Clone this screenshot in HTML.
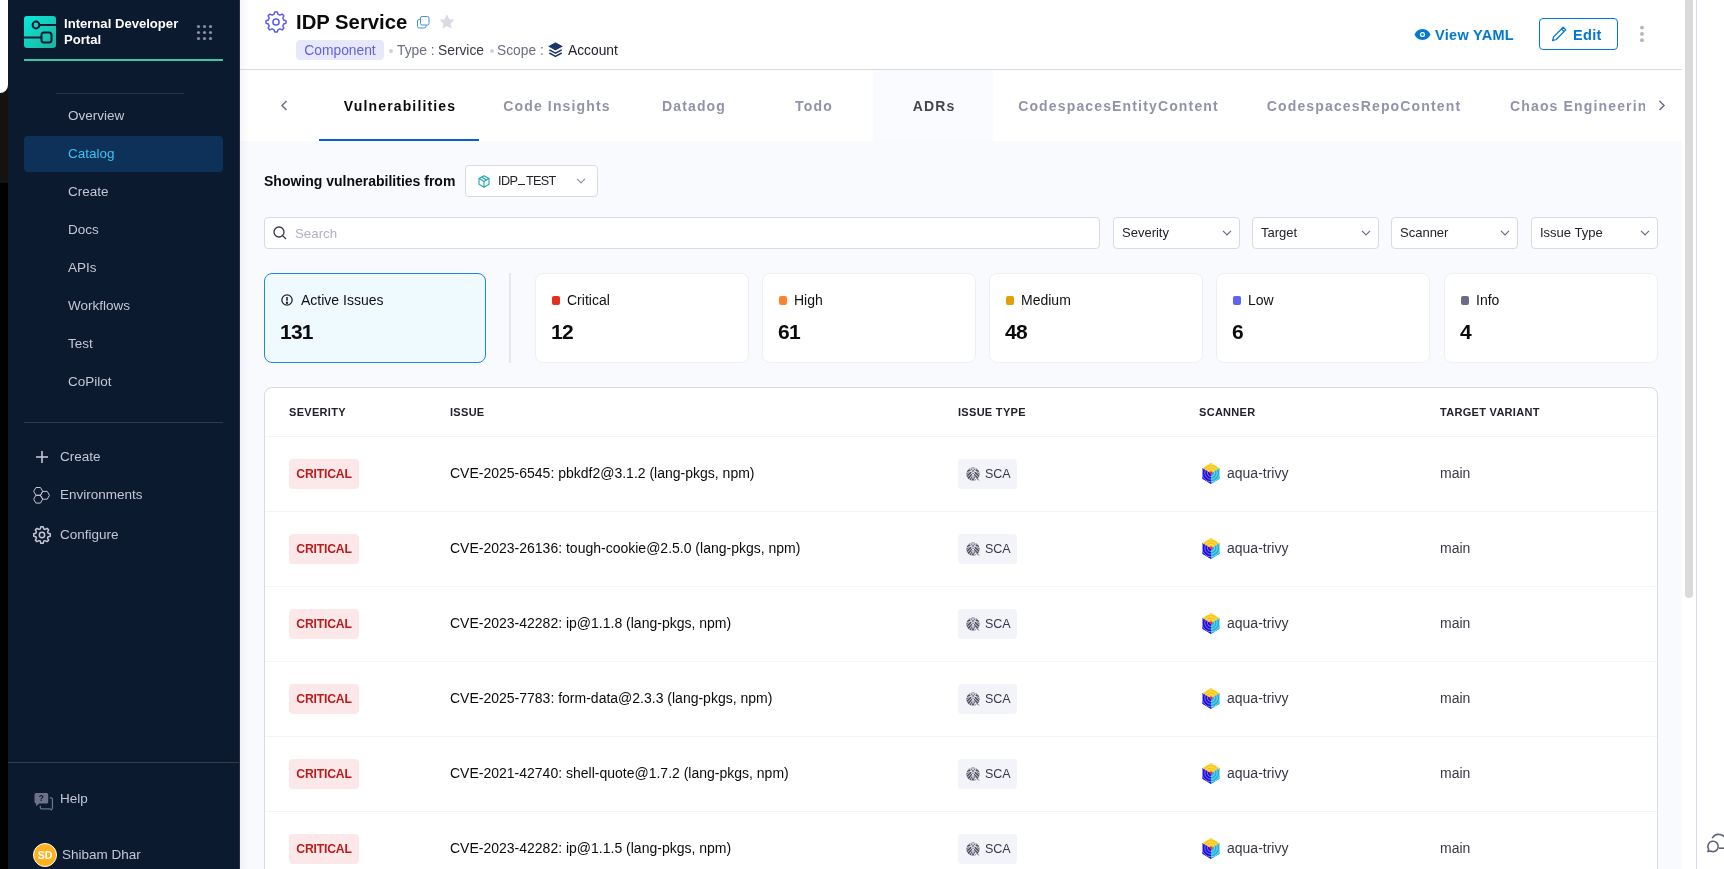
<!DOCTYPE html>
<html><head><meta charset="utf-8">
<style>
*{box-sizing:border-box;margin:0;padding:0}
html,body{width:1724px;height:869px;overflow:hidden;background:#fff;font-family:"Liberation Sans",sans-serif;color:#22222a}
.abs{position:absolute}
#strip{position:absolute;left:0;top:0;width:8px;height:869px;background:#000}
#strip .w{position:absolute;left:0;top:0;width:8px;height:93px;background:#fff;border-bottom-right-radius:8px}
#strip .g{position:absolute;left:0;top:80px;width:8px;height:103px;background:#15120f;z-index:0}
#side{will-change:transform;position:absolute;left:8px;top:0;width:232px;height:869px;background:#0b1a2f}
.nav{position:absolute;left:16px;width:199px;height:36px;border-radius:4px;color:#c5c6d6;font-size:13.5px;line-height:36px;padding-left:44px}
.nav.act{background:#0d3158;color:#3dc2f3}
.nav2{position:absolute;left:52px;color:#c5c6d6;font-size:13.5px;line-height:20px}
#main{will-change:transform;position:absolute;left:240px;top:0;width:1442px;height:869px;background:#f9fafd}
#hdr{position:absolute;left:0;top:0;width:1442px;height:70px;background:#fff;border-bottom:1px solid #d9dae5}
#tabs{position:absolute;left:0;top:70px;width:1442px;height:71px;background:#fff}
.tab{position:absolute;top:0;height:71px;line-height:73px;padding-left:2px;font-size:14px;font-weight:700;letter-spacing:1.15px;color:#9293ab;white-space:nowrap}
.box{position:absolute;background:#fff;border:1px solid #d9dae5;border-radius:4px}
.dd{position:absolute;top:217px;width:127px;height:32px;background:#fff;border:1px solid #d9dae5;border-radius:4px;font-size:13px;color:#22222a;line-height:30px;padding-left:8px}
.card{position:absolute;top:273px;height:90px;background:#fff;border:1px solid #eff0f5;border-radius:8px}
.card .lbl{position:absolute;left:16px;top:18px;font-size:14px;line-height:16px;color:#111114;padding-left:15px}
.card .sq{position:absolute;left:15.5px;top:22px;width:8.5px;height:8.5px;border-radius:2px}
.card .num{position:absolute;left:15px;top:46px;font-size:21px;font-weight:700;line-height:24px;color:#0b0b0d;letter-spacing:-0.8px}
#tbl{position:absolute;left:24px;top:387px;width:1394px;height:520px;background:#fff;border:1px solid #d9dae5;border-radius:8px}
.th{position:absolute;top:18px;font-size:11px;font-weight:700;letter-spacing:0.3px;color:#22222a}
.row{position:absolute;left:0;width:1392px;height:75px;border-top:1px solid #f3f3fa}
.crit{position:absolute;left:24px;top:22px;width:70px;height:30px;background:#fce8e8;border-radius:4px;color:#b91c1c;font-size:12.2px;font-weight:700;line-height:31px;text-align:center;letter-spacing:-0.2px}
.iss{position:absolute;left:185px;top:27px;font-size:14px;line-height:18px;color:#0b0b0d;white-space:nowrap}
.sca{position:absolute;left:693px;top:22px;width:59px;height:30px;background:#f3f3fa;border-radius:4px;color:#383946;font-size:12.5px;line-height:31px;padding-left:27px}
.scan{position:absolute;left:936px;top:27px;font-size:14px;line-height:18px;color:#383946;padding-left:26px}
.tv{position:absolute;left:1175px;top:27px;font-size:14px;line-height:18px;color:#383946}
</style></head><body>
<svg width="0" height="0" style="position:absolute"><defs>
<g id="scaic"><clipPath id="scc"><circle cx="7" cy="7" r="6.6"/></clipPath>
 <g clip-path="url(#scc)"><rect width="14" height="14" fill="#4f5162"/>
 <path d="M0 3.5Q7 -.5 14 3.5M0 6Q7 2 14 6M-1 9.5L7 2 15 9.5M-1 12.5L7 5 15 12.5M2 14L7 7l5 7M4 1l5 13M10 1L5 14" stroke="#f3f3fa" stroke-width=".75" fill="none"/>
 </g>
 <path d="M9.2 8.8L13.2 13.4 8.6 12.2z" fill="#f3f3fa"/><path d="M9 9.2l3.8 4.2" stroke="#4f5162" stroke-width="1"/>
</g>
<g id="trivy">
 <clipPath id="hexc"><path d="M10 .8L18.8 6v11L10 22.2 1.2 17V6z"/></clipPath>
 <g clip-path="url(#hexc)">
 <path d="M10 .8L18.8 6 10 11.2 1.2 6z" fill="#ffc60a"/>
 <path d="M1.2 6L10 11.2V22.2L1.2 17z" fill="#1a0adb"/>
 <path d="M18.8 6L10 11.2V22.2L18.8 17z" fill="#1cb3d9"/>
 <g fill="none" stroke="#fff" stroke-width=".6" opacity=".75">
  <circle cx="10" cy="11" r="3.6"/><circle cx="10" cy="11" r="6.2"/><circle cx="10" cy="11" r="8.8"/>
 </g>
 </g>
 <circle cx="10" cy="11" r="1.4" fill="#ff1f4b"/>
</g>
</defs></svg>
<div id="strip"><div class="g"></div><div class="w"></div></div>
<div id="side">
  <svg class="abs" style="left:16px;top:16px" width="32" height="32" viewBox="0 0 32 32">
    <defs><linearGradient id="lg" x1="0" y1="0" x2="1" y2="1"><stop offset="0" stop-color="#0ae8dc"/><stop offset="1" stop-color="#1eb39e"/></linearGradient></defs>
    <rect x="0" y="0" width="32" height="32" rx="3" fill="url(#lg)"/>
    <circle cx="12" cy="9" r="3.4" fill="none" stroke="#0b1a2f" stroke-width="2"/>
    <line x1="15.4" y1="9" x2="32" y2="9" stroke="#0b1a2f" stroke-width="2"/>
    <rect x="17.5" y="16.5" width="10" height="10" rx="2.5" fill="none" stroke="#0b1a2f" stroke-width="2"/>
    <line x1="0" y1="21.5" x2="17.5" y2="21.5" stroke="#0b1a2f" stroke-width="2"/>
  </svg>
  <div class="abs" style="left:56px;top:16px;font-size:13.1px;font-weight:700;line-height:16px;color:#fff;letter-spacing:0px">Internal Developer<br>Portal</div>
  <svg class="abs" style="left:188px;top:24px" width="17" height="17" viewBox="0 0 17 17" fill="#8b8ca6">
    <circle cx="2.5" cy="2.5" r="1.6"/><circle cx="8.5" cy="2.5" r="1.6"/><circle cx="14.5" cy="2.5" r="1.6"/>
    <circle cx="2.5" cy="8.5" r="1.6"/><circle cx="8.5" cy="8.5" r="1.6"/><circle cx="14.5" cy="8.5" r="1.6"/>
    <circle cx="2.5" cy="14.5" r="1.6"/><circle cx="8.5" cy="14.5" r="1.6"/><circle cx="14.5" cy="14.5" r="1.6"/>
  </svg>
  <div class="abs" style="left:16px;top:59px;width:199px;height:2px;background:#3cc6a8"></div>
  <div class="abs" style="left:48px;top:93px;width:128px;height:1px;background:#27344a"></div>
  <div class="nav" style="top:98px">Overview</div>
  <div class="nav act" style="top:136px">Catalog</div>
  <div class="nav" style="top:174px">Create</div>
  <div class="nav" style="top:212px">Docs</div>
  <div class="nav" style="top:250px">APIs</div>
  <div class="nav" style="top:288px">Workflows</div>
  <div class="nav" style="top:326px">Test</div>
  <div class="nav" style="top:364px">CoPilot</div>
  <div class="abs" style="left:16px;top:422px;width:199px;height:1px;background:#36384a"></div>
  <svg class="abs" style="left:27px;top:450px" width="14" height="14" viewBox="0 0 14 14" stroke="#c5c6d6" stroke-width="1.6"><line x1="7" y1="1" x2="7" y2="13"/><line x1="1" y1="7" x2="13" y2="7"/></svg>
  <div class="nav2" style="top:447px">Create</div>
  <svg class="abs" style="left:24px;top:486px" width="20" height="18" viewBox="0 0 20 18" fill="none" stroke="#c5c6d6" stroke-width="1" stroke-linejoin="round">
    <path d="M10.70 5.40 L8.45 9.29 L3.95 9.29 L1.70 5.40 L3.95 1.50 L8.45 1.50 Z"/><path d="M10.70 13.19 L8.45 17.09 L3.95 17.09 L1.70 13.19 L3.95 9.29 L8.45 9.29 Z"/><path d="M17.45 9.29 L15.20 13.19 L10.70 13.19 L8.45 9.29 L10.70 5.40 L15.20 5.40 Z"/>
  </svg>
  <div class="nav2" style="top:485px">Environments</div>
  <svg class="abs" style="left:24px;top:525px" width="20" height="20" viewBox="0 0 24 24" fill="none" stroke="#c5c6d6" stroke-width="1.8" stroke-linejoin="round">
    <path d="M9.91 4.69 L10.61 2.10 A10.0 10.0 0 0 1 13.39 2.10 L14.09 4.69 A7.6 7.6 0 0 1 15.68 5.35 L18.02 4.01 A10.0 10.0 0 0 1 19.99 5.98 L18.65 8.32 A7.6 7.6 0 0 1 19.31 9.91 L21.90 10.61 A10.0 10.0 0 0 1 21.90 13.39 L19.31 14.09 A7.6 7.6 0 0 1 18.65 15.68 L19.99 18.02 A10.0 10.0 0 0 1 18.02 19.99 L15.68 18.65 A7.6 7.6 0 0 1 14.09 19.31 L13.39 21.90 A10.0 10.0 0 0 1 10.61 21.90 L9.91 19.31 A7.6 7.6 0 0 1 8.32 18.65 L5.98 19.99 A10.0 10.0 0 0 1 4.01 18.02 L5.35 15.68 A7.6 7.6 0 0 1 4.69 14.09 L2.10 13.39 A10.0 10.0 0 0 1 2.10 10.61 L4.69 9.91 A7.6 7.6 0 0 1 5.35 8.32 L4.01 5.98 A10.0 10.0 0 0 1 5.98 4.01 L8.32 5.35 A7.6 7.6 0 0 1 9.91 4.69Z"/>
    <circle cx="12" cy="12" r="3.2"/>
  </svg>
  <div class="nav2" style="top:525px">Configure</div>
  <div class="abs" style="left:0;top:762px;width:232px;height:1px;background:#3a3b4d"></div>
  <svg class="abs" style="left:26px;top:792px" width="20" height="19" viewBox="0 0 19 18">
    <path d="M2 1h10a1.5 1.5 0 0 1 1.5 1.5v7a1.5 1.5 0 0 1-1.5 1.5H5l-3 2.5V11A1.5 1.5 0 0 1 .5 9.5v-7A1.5 1.5 0 0 1 2 1z" fill="#6f7189"/>
    <text x="7" y="8.6" font-size="8" font-weight="700" fill="#0b1a2f" text-anchor="middle" font-family="Liberation Sans">?</text>
    <path d="M15 5.5h1.5a1 1 0 0 1 1 1v9l-1.2 1.5-1.3-1H7a1 1 0 0 1-1-1v-2" fill="none" stroke="#6f7189" stroke-width="1.2"/>
  </svg>
  <div class="nav2" style="top:789px">Help</div>
  <div class="abs" style="left:25px;top:843px;width:24px;height:24px;border-radius:12px;background:#fbb11c;border:1.2px solid #fff;color:#fff;font-size:10.5px;font-weight:700;text-align:center;line-height:22px">SD</div>
  <div class="nav2" style="left:54px;top:845px">Shibam Dhar</div>
</div>
<div id="main">
  <div id="hdr">
    <svg class="abs" style="left:24px;top:10px" width="24" height="24" viewBox="0 0 24 24" fill="none" stroke="#5b5cf0" stroke-width="1.5" stroke-linejoin="round">
      <path d="M9.96 4.37 L10.78 2.07 A10.0 10.0 0 0 1 13.22 2.07 L14.04 4.37 A7.9 7.9 0 0 1 15.95 5.16 L18.16 4.12 A10.0 10.0 0 0 1 19.88 5.84 L18.84 8.05 A7.9 7.9 0 0 1 19.63 9.96 L21.93 10.78 A10.0 10.0 0 0 1 21.93 13.22 L19.63 14.04 A7.9 7.9 0 0 1 18.84 15.95 L19.88 18.16 A10.0 10.0 0 0 1 18.16 19.88 L15.95 18.84 A7.9 7.9 0 0 1 14.04 19.63 L13.22 21.93 A10.0 10.0 0 0 1 10.78 21.93 L9.96 19.63 A7.9 7.9 0 0 1 8.05 18.84 L5.84 19.88 A10.0 10.0 0 0 1 4.12 18.16 L5.16 15.95 A7.9 7.9 0 0 1 4.37 14.04 L2.07 13.22 A10.0 10.0 0 0 1 2.07 10.78 L4.37 9.96 A7.9 7.9 0 0 1 5.16 8.05 L4.12 5.84 A10.0 10.0 0 0 1 5.84 4.12 L8.05 5.16 A7.9 7.9 0 0 1 9.96 4.37Z"/>
      <circle cx="12" cy="12" r="3.1"/>
    </svg>
    <div class="abs" style="left:56px;top:10px;font-size:20.3px;font-weight:700;line-height:24px;color:#0b0b0d;white-space:nowrap">IDP Service</div>
    <svg class="abs" style="left:176px;top:15px" width="14" height="14" viewBox="0 0 14 14" fill="none" stroke="#3f90e0" stroke-width="1">
      <rect x="4.5" y="1.5" width="8.5" height="8.5" rx="1.6"/>
      <path d="M4.5 4.5h-1.4a1.6 1.6 0 0 0-1.6 1.6v5.3a1.6 1.6 0 0 0 1.6 1.6h5.3a1.6 1.6 0 0 0 1.6-1.6v-1.4"/>
    </svg>
    <svg class="abs" style="left:199px;top:14px" width="16" height="15.3" viewBox="0 0 24 23"><path d="M12 0.5l3.4 7.3 7.9.9-5.9 5.4 1.6 7.9L12 18 5 22l1.6-7.9L.7 8.7l7.9-.9z" fill="#d9dae5"/></svg>
    <div class="abs" style="left:56px;top:40px;width:88px;height:20px;background:#e8e8fd;border-radius:4px;color:#6461db;font-size:13.8px;line-height:21px;text-align:center">Component</div>
    <div class="abs" style="left:149px;top:49px;width:4px;height:4px;border-radius:2px;background:#d0d1dc"></div>
    <div class="abs" style="left:157px;top:41px;font-size:13.8px;line-height:20px;color:#6b6d85;white-space:nowrap">Type :</div>
    <div class="abs" style="left:198px;top:41px;font-size:13.8px;line-height:20px;color:#383946;white-space:nowrap">Service</div>
    <div class="abs" style="left:250px;top:49px;width:4px;height:4px;border-radius:2px;background:#d0d1dc"></div>
    <div class="abs" style="left:257px;top:41px;font-size:13.8px;line-height:20px;color:#6b6d85;white-space:nowrap">Scope :</div>
    <svg class="abs" style="left:308px;top:42px" width="15" height="16" viewBox="0 0 14 15">
      <path d="M7 .8l6 3.3-6 3.3-6-3.3z" fill="#1b3564" stroke="#1b3564" stroke-width="1" stroke-linejoin="round"/>
      <path d="M1.2 7.3L7 10.5l5.8-3.2" fill="none" stroke="#1b3564" stroke-width="1.4" stroke-linejoin="round"/>
      <path d="M1.2 10.3L7 13.5l5.8-3.2" fill="none" stroke="#1b3564" stroke-width="1.4" stroke-linejoin="round"/>
    </svg>
    <div class="abs" style="left:328px;top:41px;font-size:13.8px;line-height:20px;color:#22222a">Account</div>
    <svg class="abs" style="left:1174px;top:28px" width="17" height="13" viewBox="0 0 17 13">
      <path d="M8.5 1C4.5 1 1.6 3.8.6 6.5c1 2.7 3.9 5.5 7.9 5.5s6.9-2.8 7.9-5.5C15.4 3.8 12.5 1 8.5 1z" fill="#0278d5"/>
      <circle cx="8.5" cy="6.5" r="2.6" fill="#fff"/><circle cx="8.5" cy="6.5" r="1.3" fill="#0278d5"/>
    </svg>
    <div class="abs" style="left:1195px;top:25px;font-size:14.5px;font-weight:700;line-height:20px;color:#0278d5;letter-spacing:0.3px;white-space:nowrap">View YAML</div>
    <div class="abs" style="left:1299px;top:18px;width:79px;height:32px;border:1px solid #0278d5;border-radius:4px"></div>
    <svg class="abs" style="left:1311px;top:26px" width="17" height="16" viewBox="0 0 17 16" fill="none" stroke="#0278d5" stroke-width="1.3" stroke-linejoin="round">
      <path d="M12.2 1.3l2.6 2.6L5.2 13.5 1.6 14.6l1-3.7z"/><path d="M10.5 3l2.6 2.6"/>
    </svg>
    <div class="abs" style="left:1333px;top:25px;font-size:14.5px;font-weight:700;line-height:20px;color:#0278d5;letter-spacing:0.3px">Edit</div>
    <svg class="abs" style="left:1400px;top:25px" width="6" height="18" viewBox="0 0 6 18" fill="#b0b1c4"><circle cx="2" cy="2.6" r="1.9"/><circle cx="2" cy="8.9" r="1.9"/><circle cx="2" cy="15.2" r="1.9"/></svg>
  </div>
  <div id="tabs">
    <svg class="abs" style="left:40px;top:30px" width="8" height="11" viewBox="0 0 8 11" fill="none" stroke="#6b6d85" stroke-width="1.5"><path d="M6.5 1L2 5.5l4.5 4.5"/></svg>
    <div class="tab" style="left:79px;width:160px;color:#0b0b0d;text-align:center">Vulnerabilities</div>
    <div class="abs" style="left:79px;top:69px;width:160px;height:2px;background:#0b5cd7"></div>
    <div class="tab" style="left:239px;width:154px;text-align:center">Code Insights</div>
    <div class="tab" style="left:393px;width:120px;text-align:center">Datadog</div>
    <div class="tab" style="left:513px;width:120px;text-align:center">Todo</div>
    <div class="tab" style="left:633px;width:120px;text-align:center;background:#fafbfe;color:#45464f">ADRs</div>
    <div class="tab" style="left:753px;width:249px;text-align:center">CodespacesEntityContent</div>
    <div class="tab" style="left:1002px;width:242px;text-align:center">CodespacesRepoContent</div>
    <div class="tab" style="left:1268px;width:137px;overflow:hidden">Chaos Engineering</div>
    <svg class="abs" style="left:1418px;top:30px" width="8" height="11" viewBox="0 0 8 11" fill="none" stroke="#6b6d85" stroke-width="1.5"><path d="M1.5 1L6 5.5 1.5 10"/></svg>
  </div>
  <div class="abs" style="left:24px;top:171px;font-size:14px;font-weight:700;line-height:20px;color:#0b0b0d;white-space:nowrap">Showing vulnerabilities from</div>
  <div class="box" style="left:225px;top:165px;width:133px;height:32px"></div>
  <svg class="abs" style="left:238px;top:175px" width="12" height="13" viewBox="0 0 12 13" fill="none" stroke="#1da5b5" stroke-width="1.1" stroke-linejoin="round">
    <path d="M6 .7l5 2.8v5.8l-5 2.9-5-2.9V3.5z"/><path d="M1 3.5l5 2.9 5-2.9M6 6.4v5.8"/><path d="M3.5 2.1l5 2.9" />
  </svg>
  <div class="abs" style="left:258px;top:171px;font-size:12.7px;line-height:20px;color:#22222a;letter-spacing:-0.65px;white-space:nowrap">IDP<span style="display:inline-block;width:6.5px;height:1.3px;background:#22222a;margin:0 1px 0 1.2px;vertical-align:baseline"></span>TEST</div>
  <svg class="abs" style="left:336px;top:178px" width="10" height="6" viewBox="0 0 10 6" fill="none" stroke="#9293ab" stroke-width="1.2"><path d="M1 .8l4 4 4-4"/></svg>
  <div class="box" style="left:24px;top:217px;width:836px;height:32px"></div>
  <svg class="abs" style="left:33px;top:226px" width="14" height="14" viewBox="0 0 14 14" fill="none" stroke="#383946" stroke-width="1.3"><circle cx="6" cy="6" r="5"/><path d="M9.6 9.6l3.4 3.4"/></svg>
  <div class="abs" style="left:55px;top:224px;font-size:13.3px;line-height:20px;color:#b0b1c4">Search</div>
  <div class="dd" style="left:873px">Severity</div><svg class="abs" style="left:982px;top:230px" width="10" height="6" viewBox="0 0 10 6" fill="none" stroke="#6b6d85" stroke-width="1.2"><path d="M1 .8l4 4 4-4"/></svg>
  <div class="dd" style="left:1012px">Target</div><svg class="abs" style="left:1121px;top:230px" width="10" height="6" viewBox="0 0 10 6" fill="none" stroke="#6b6d85" stroke-width="1.2"><path d="M1 .8l4 4 4-4"/></svg>
  <div class="dd" style="left:1151px">Scanner</div><svg class="abs" style="left:1260px;top:230px" width="10" height="6" viewBox="0 0 10 6" fill="none" stroke="#6b6d85" stroke-width="1.2"><path d="M1 .8l4 4 4-4"/></svg>
  <div class="dd" style="left:1291px">Issue Type</div><svg class="abs" style="left:1400px;top:230px" width="10" height="6" viewBox="0 0 10 6" fill="none" stroke="#6b6d85" stroke-width="1.2"><path d="M1 .8l4 4 4-4"/></svg>
  <div class="card" style="left:24px;width:222px;background:#effaff;border-color:#1f86dc"><svg class="abs" style="left:16px;top:20px" width="12" height="12" viewBox="0 0 13 13" fill="none" stroke="#22222a" stroke-width="1.4"><circle cx="6.5" cy="6.5" r="5.6"/><path d="M6.5 3.3v3.9" stroke-width="1.7"/><circle cx="6.5" cy="9.4" r=".6" fill="#22222a"/></svg><div class="lbl" style="padding-left:20px">Active Issues</div><div class="num">131</div></div>
  <div class="abs" style="left:269px;top:273px;width:2px;height:90px;background:#e6e7ee"></div>
  <div class="card" style="left:295px;width:214px"><div class="sq" style="background:#e2321f"></div><div class="lbl">Critical</div><div class="num">12</div></div>
  <div class="card" style="left:522px;width:214px"><div class="sq" style="background:#ff8233"></div><div class="lbl">High</div><div class="num">61</div></div>
  <div class="card" style="left:749px;width:214px"><div class="sq" style="background:#e2a00c"></div><div class="lbl">Medium</div><div class="num">48</div></div>
  <div class="card" style="left:976px;width:214px"><div class="sq" style="background:#6062f2"></div><div class="lbl">Low</div><div class="num">6</div></div>
  <div class="card" style="left:1204px;width:214px"><div class="sq" style="background:#6b6d85"></div><div class="lbl">Info</div><div class="num">4</div></div>
  <div id="tbl">
    <div class="th" style="left:24px">SEVERITY</div>
    <div class="th" style="left:185px">ISSUE</div>
    <div class="th" style="left:693px">ISSUE TYPE</div>
    <div class="th" style="left:934px">SCANNER</div>
    <div class="th" style="left:1175px">TARGET VARIANT</div>
    <div class="row" style="top:48px"><div class="crit">CRITICAL</div><div class="iss">CVE-2025-6545: pbkdf2@3.1.2 (lang-pkgs, npm)</div><div class="sca"><svg class="abs" style="left:8px;top:8px" width="14" height="14" viewBox="0 0 14 14"><use href="#scaic"/></svg>SCA</div><div class="scan"><svg class="abs" style="left:0;top:-2px" width="20" height="23" viewBox="0 0 20 23"><use href="#trivy"/></svg>aqua-trivy</div><div class="tv">main</div></div>
    <div class="row" style="top:123px"><div class="crit">CRITICAL</div><div class="iss">CVE-2023-26136: tough-cookie@2.5.0 (lang-pkgs, npm)</div><div class="sca"><svg class="abs" style="left:8px;top:8px" width="14" height="14" viewBox="0 0 14 14"><use href="#scaic"/></svg>SCA</div><div class="scan"><svg class="abs" style="left:0;top:-2px" width="20" height="23" viewBox="0 0 20 23"><use href="#trivy"/></svg>aqua-trivy</div><div class="tv">main</div></div>
    <div class="row" style="top:198px"><div class="crit">CRITICAL</div><div class="iss">CVE-2023-42282: ip@1.1.8 (lang-pkgs, npm)</div><div class="sca"><svg class="abs" style="left:8px;top:8px" width="14" height="14" viewBox="0 0 14 14"><use href="#scaic"/></svg>SCA</div><div class="scan"><svg class="abs" style="left:0;top:-2px" width="20" height="23" viewBox="0 0 20 23"><use href="#trivy"/></svg>aqua-trivy</div><div class="tv">main</div></div>
    <div class="row" style="top:273px"><div class="crit">CRITICAL</div><div class="iss">CVE-2025-7783: form-data@2.3.3 (lang-pkgs, npm)</div><div class="sca"><svg class="abs" style="left:8px;top:8px" width="14" height="14" viewBox="0 0 14 14"><use href="#scaic"/></svg>SCA</div><div class="scan"><svg class="abs" style="left:0;top:-2px" width="20" height="23" viewBox="0 0 20 23"><use href="#trivy"/></svg>aqua-trivy</div><div class="tv">main</div></div>
    <div class="row" style="top:348px"><div class="crit">CRITICAL</div><div class="iss">CVE-2021-42740: shell-quote@1.7.2 (lang-pkgs, npm)</div><div class="sca"><svg class="abs" style="left:8px;top:8px" width="14" height="14" viewBox="0 0 14 14"><use href="#scaic"/></svg>SCA</div><div class="scan"><svg class="abs" style="left:0;top:-2px" width="20" height="23" viewBox="0 0 20 23"><use href="#trivy"/></svg>aqua-trivy</div><div class="tv">main</div></div>
    <div class="row" style="top:423px"><div class="crit">CRITICAL</div><div class="iss">CVE-2023-42282: ip@1.1.5 (lang-pkgs, npm)</div><div class="sca"><svg class="abs" style="left:8px;top:8px" width="14" height="14" viewBox="0 0 14 14"><use href="#scaic"/></svg>SCA</div><div class="scan"><svg class="abs" style="left:0;top:-2px" width="20" height="23" viewBox="0 0 20 23"><use href="#trivy"/></svg>aqua-trivy</div><div class="tv">main</div></div>
  </div>
</div>
<div class="abs" style="left:240px;top:0;width:9px;height:869px;background:linear-gradient(90deg,rgba(0,0,10,.035),rgba(0,0,10,0))"></div>
<div class="abs" style="left:239px;top:0;width:1px;height:869px;background:#2a2d3d"></div>
<div class="abs" style="left:1682px;top:0;width:14px;height:869px;background:#fff"></div>
<div class="abs" style="left:1685px;top:-2px;width:8px;height:600px;background:#dadada;border-radius:4px"></div>
<div class="abs" style="left:1696px;top:0;width:1px;height:869px;background:#d9dae5"></div>
<svg class="abs" style="left:1704px;top:830px" width="20" height="26" viewBox="0 0 20 26" fill="none" stroke="#5f6178" stroke-width="1.6">
  <path d="M8.2 8.2A7.5 7.5 0 0 1 22 10"/>
  <path d="M4 21.5l.6-2.4A5.2 5.2 0 1 1 6.6 21z" stroke-linejoin="round"/>
  <path d="M15 18.2h5"/>
</svg>
</body></html>
